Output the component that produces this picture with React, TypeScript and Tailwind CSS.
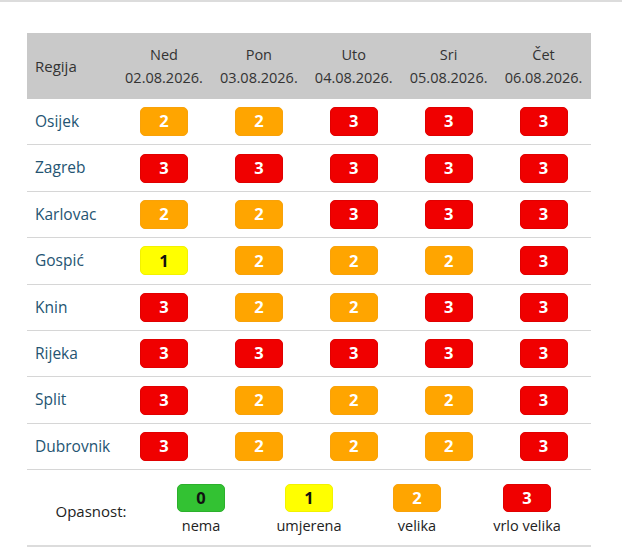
import React from "react";

type Level = 0 | 1 | 2 | 3;

const days = [
  { d: "Ned", date: "02.08.2026." },
  { d: "Pon", date: "03.08.2026." },
  { d: "Uto", date: "04.08.2026." },
  { d: "Sri", date: "05.08.2026." },
  { d: "Čet", date: "06.08.2026." },
];

const rows: { name: string; v: Level[] }[] = [
  { name: "Osijek", v: [2, 2, 3, 3, 3] },
  { name: "Zagreb", v: [3, 3, 3, 3, 3] },
  { name: "Karlovac", v: [2, 2, 3, 3, 3] },
  { name: "Gospić", v: [1, 2, 2, 2, 3] },
  { name: "Knin", v: [3, 2, 2, 3, 3] },
  { name: "Rijeka", v: [3, 3, 3, 3, 3] },
  { name: "Split", v: [3, 2, 2, 2, 3] },
  { name: "Dubrovnik", v: [3, 2, 2, 2, 3] },
];

function Badge({ level, h = "h-[29px]" }: { level: Level; h?: string }) {
  const cls =
    level === 0
      ? "bg-[#33c233] text-[#111] border-[#2cb02c]"
      : level === 1
      ? "bg-[#ffff00] text-[#111] border-[#f2f200]"
      : level === 2
      ? "bg-[#ffa500] text-white border-[#f8a20a]"
      : "bg-[#f00000] text-white border-[#e00000]";
  return (
    <div
      className={`w-[48px] ${h} rounded-[5px] border flex items-center justify-center font-bold text-[16.5px] leading-none ${cls}`}
    >
      {level}
    </div>
  );
}

export default function App() {
  return (
    <div
      className="w-full min-h-[553px] bg-white border-t-2 border-[#dcdcdc]"
      style={{ fontFamily: '"Open Sans", "Noto Sans", sans-serif' }}
    >
      <div className="pl-[27px] pr-[31px] pt-[31px]">
        <div className="w-[564px]">
          <div className="grid grid-cols-[89.5px_repeat(5,1fr)] h-[66px] bg-[#c9c9c9] text-[#333] text-[14.5px] leading-[23px] items-center">
            <div className="pl-[8px] text-[15px]">Regija</div>
            {days.map((d) => (
              <div key={d.date} className="flex flex-col items-center">
                <span>{d.d}</span>
                <span>{d.date}</span>
              </div>
            ))}
          </div>
          {rows.map((r) => (
            <div
              key={r.name}
              className="grid grid-cols-[89.5px_repeat(5,1fr)] h-[46.4px] border-b border-[#d6d6d6] items-center"
            >
              <div className="pl-[8px] text-[15.5px] text-[#245472]">{r.name}</div>
              {r.v.map((v, i) => (
                <div key={i} className="flex justify-center">
                  <Badge level={v} />
                </div>
              ))}
            </div>
          ))}
          <div className="grid grid-cols-[128px_92px_124px_92px_128px] h-[77px] border-b-2 border-[#dcdcdc] text-[14.5px] text-[#222]">
            <div className="flex items-center justify-center pt-[8px] text-[15px]">Opasnost:</div>
            {([
              [0, "nema"],
              [1, "umjerena"],
              [2, "velika"],
              [3, "vrlo velika"],
            ] as [Level, string][]).map(([lv, lbl]) => (
              <div key={lbl} className="flex flex-col items-center pt-[14px]">
                <Badge level={lv} h="h-[28px]" />
                <span className="leading-[20px] mt-[4px]">{lbl}</span>
              </div>
            ))}
          </div>
        </div>
      </div>
    </div>
  );
}
